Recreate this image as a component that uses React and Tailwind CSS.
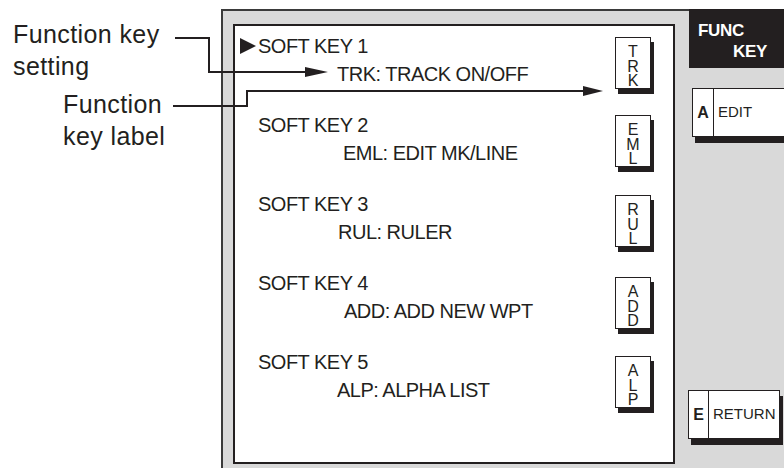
import React from 'react';

const ink = '#231f20';

const keys = [
  { n: 1, code: 'TRK', desc: 'TRK: TRACK ON/OFF', indent: 'pl-[79px]', boxTop: 'mt-[5px]', current: true },
  { n: 2, code: 'EML', desc: 'EML: EDIT MK/LINE', indent: 'pl-[85px]', boxTop: 'mt-[4px]' },
  { n: 3, code: 'RUL', desc: 'RUL: RULER', indent: 'pl-[80px]', boxTop: 'mt-[5px]' },
  { n: 4, code: 'ADD', desc: 'ADD: ADD NEW WPT', indent: 'pl-[86px]', boxTop: 'mt-[8px]' },
  { n: 5, code: 'ALP', desc: 'ALP: ALPHA LIST', indent: 'pl-[79px]', boxTop: 'mt-[8px]' },
];

const KeyLabel = ({ code, top }) => (
  <div className={`${top} mr-[22px] flex h-[52px] w-[36px] shrink-0 flex-col items-center border border-[#231f20] bg-white pt-[7px] text-[16px] leading-[14.5px] shadow-[3px_5px_0_#231f20]`}>
    {code.split('').map((c, i) => (
      <span key={i}>{c}</span>
    ))}
  </div>
);

const SoftKeyRow = ({ item }) => (
  <div className="flex h-[79px]">
    <div className="flex w-[23px] shrink-0 pl-[5px] pt-[6px]">
      {item.current && (
        <svg width="16" height="16" viewBox="0 0 16 16">
          <polygon points="0,0 16,8 0,16" fill={ink} />
        </svg>
      )}
    </div>
    <div className="flex-1 text-[20px] leading-[28px] tracking-[-0.5px]">
      <div>SOFT KEY {item.n}</div>
      <div className={item.indent}>{item.desc}</div>
    </div>
    <KeyLabel code={item.code} top={item.boxTop} />
  </div>
);

const SideButton = ({ letter, label, box, cell }) => (
  <div className={`${box} flex h-[49px] border border-[#231f20] bg-white shadow-[3px_6px_0_#231f20]`}>
    <div className={`${cell} flex shrink-0 items-center justify-center border-r border-[#231f20] text-[16px] font-bold`}>
      {letter}
    </div>
    <div className="flex items-center pl-[4px] text-[15px]">{label}</div>
  </div>
);

export default function App() {
  return (
    <div
      className="relative flex h-[468px] w-[784px] overflow-hidden bg-white text-[#231f20]"
      style={{ fontFamily: '"Liberation Sans", Arial, sans-serif' }}
    >
      {/* callout captions */}
      <div className="w-[221px] shrink-0 pl-[13px] pt-[18px] text-[25px] leading-[32px] tracking-[0.4px]">
        <div>Function key</div>
        <div>setting</div>
        <div className="mt-[6px] pl-[50px]">
          <div>Function</div>
          <div>key label</div>
        </div>
      </div>

      {/* screen frame */}
      <div className="mt-[9px] flex flex-1 border-l-2 border-t-2 border-[#3a3a3a] bg-[#d9d9d9]">
        <div className="ml-[10px] mt-[13px] h-[440px] w-[442px] shrink-0 border-2 border-[#231f20] bg-white pt-[6px]">
          {keys.map((k) => (
            <SoftKeyRow key={k.n} item={k} />
          ))}
        </div>

        <div className="-mt-[2px] ml-[14px] flex flex-1 flex-col">
          <div className="h-[59px] bg-[#231f20] pt-[11px] text-[17px] font-bold leading-[21px] tracking-[-0.3px] text-white">
            <div className="pl-[9px]">FUNC</div>
            <div className="pl-[44px]">KEY</div>
          </div>
          <SideButton letter="A" label="EDIT" box="ml-[3px] mt-[20px] w-[100px]" cell="w-[21px]" />
          <SideButton letter="E" label="RETURN" box="-ml-[1px] mt-[253px] w-[92px]" cell="w-[20px]" />
        </div>
      </div>

      {/* leader lines */}
      <svg className="pointer-events-none absolute left-0 top-0" width="784" height="468">
        <path d="M175 38 H209 V72 H310" fill="none" stroke={ink} strokeWidth="2" />
        <polygon points="305,67 328,72 305,77" fill={ink} />
        <path d="M173 106 H247 V91 H587" fill="none" stroke={ink} strokeWidth="2" />
        <polygon points="583,86 603,91 583,96" fill={ink} />
      </svg>
    </div>
  );
}
